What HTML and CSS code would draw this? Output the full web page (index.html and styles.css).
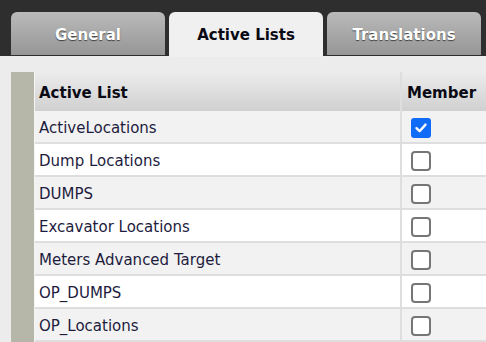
FILE: index.html
```html
<!doctype html>
<html>
<head>
<meta charset="utf-8">
<title>Active Lists</title>
<link rel="stylesheet" href="styles.css">
</head>
<body>
<div id="tabbar">
	<div class="tab">General</div>
	<div class="tab active">Active Lists</div>
	<div class="tab">Translations</div>
</div>

<div id="panel">
	<div id="gutter"></div>
	<div id="lists">
		<div class="row head">
			<div class="name">Active List</div>
			<div class="member">Member</div>
		</div>
		<div class="row odd">
			<div class="name">ActiveLocations</div>
			<div class="member"><span class="box checked"><svg width="14" height="14" viewBox="0 0 14 14"><path d="M2.5 7.2 L5.6 10.2 L11.5 3.6" fill="none" stroke="#fff" stroke-width="2.4" stroke-linecap="round" stroke-linejoin="round"/></svg></span></div>
		</div>
		<div class="row">
			<div class="name">Dump Locations</div>
			<div class="member"><span class="box"></span></div>
		</div>
		<div class="row odd">
			<div class="name">DUMPS</div>
			<div class="member"><span class="box"></span></div>
		</div>
		<div class="row">
			<div class="name">Excavator Locations</div>
			<div class="member"><span class="box"></span></div>
		</div>
		<div class="row odd">
			<div class="name">Meters Advanced Target</div>
			<div class="member"><span class="box"></span></div>
		</div>
		<div class="row">
			<div class="name">OP_DUMPS</div>
			<div class="member"><span class="box"></span></div>
		</div>
		<div class="row odd">
			<div class="name">OP_Locations</div>
			<div class="member"><span class="box"></span></div>
		</div>
	</div>
</div>
</body>
</html>
```

FILE: styles.css
```css
body {
	margin: 0px;
	width: 486px;
	height: 342px;
	overflow: hidden;
	background-color: rgb(236,236,236);
	font-family: "DejaVu Sans", sans-serif;
	color: rgb(30,28,62);
}

#tabbar {
	display: flex;
	align-items: flex-end;
	gap: 4px;
	height: 56px;
	padding-left: 11px;
	background-color: rgb(46,46,46);
	box-sizing: border-box;
}

.tab {
	width: 154px;
	height: 43px;
	margin-bottom: 1px;
	padding-top: 3px;
	box-sizing: border-box;
	line-height: 40px;
	text-align: center;
	font-size: 15px;
	font-weight: bold;
	color: rgb(255,255,255);
	text-shadow: 0px 1px 1px rgba(0,0,0,0.6);
	background: linear-gradient(rgb(186,186,186), rgb(150,150,150));
	border-radius: 6px 6px 0px 0px;
}

.tab.active {
	height: 45px;
	margin-bottom: -1px;
	color: rgb(10,10,20);
	text-shadow: none;
	background: rgb(240,240,240);
}

#panel {
	display: flex;
	padding-top: 16px;
	padding-left: 11px;
}

#gutter {
	width: 23px;
	flex-shrink: 0;
	background-color: rgb(183,183,169);
	border-right: 1px solid rgb(245,245,245);
}

#lists {
	flex: 1;
	min-width: 0;
}

.row {
	display: flex;
	height: 33px;
	padding-top: 2px;
	box-sizing: border-box;
	border-bottom: 2px solid rgb(222,222,222);
	background-color: rgb(255,255,255);
	font-size: 15px;
}

.row.odd {
	background-color: rgb(242,242,242);
}

.row.head {
	height: 39px;
	padding-top: 3px;
	border-bottom: none;
	font-weight: bold;
	color: rgb(10,10,20);
	background: linear-gradient(rgb(236,236,236), rgb(208,208,208));
}

.name {
	width: 367px;
	flex-shrink: 0;
	display: flex;
	align-items: center;
	padding-left: 4px;
	box-sizing: border-box;
	border-right: 2px solid rgb(222,222,222);
}

.row .name {
	margin-top: -2px;
	padding-top: 2px;
}

.head .name {
	margin-top: -3px;
	padding-top: 3px;
}

.member {
	display: flex;
	align-items: center;
	padding-left: 9px;
	white-space: nowrap;
}

.head .member {
	padding-left: 5px;
}

.box {
	display: flex;
	align-items: center;
	justify-content: center;
	width: 20px;
	height: 20px;
	box-sizing: border-box;
	border: 2px solid rgb(118,118,118);
	border-radius: 4px;
	background-color: rgb(255,255,255);
}

.box.checked {
	border: none;
	border-radius: 3px;
	background-color: rgb(16,108,246);
}
```
